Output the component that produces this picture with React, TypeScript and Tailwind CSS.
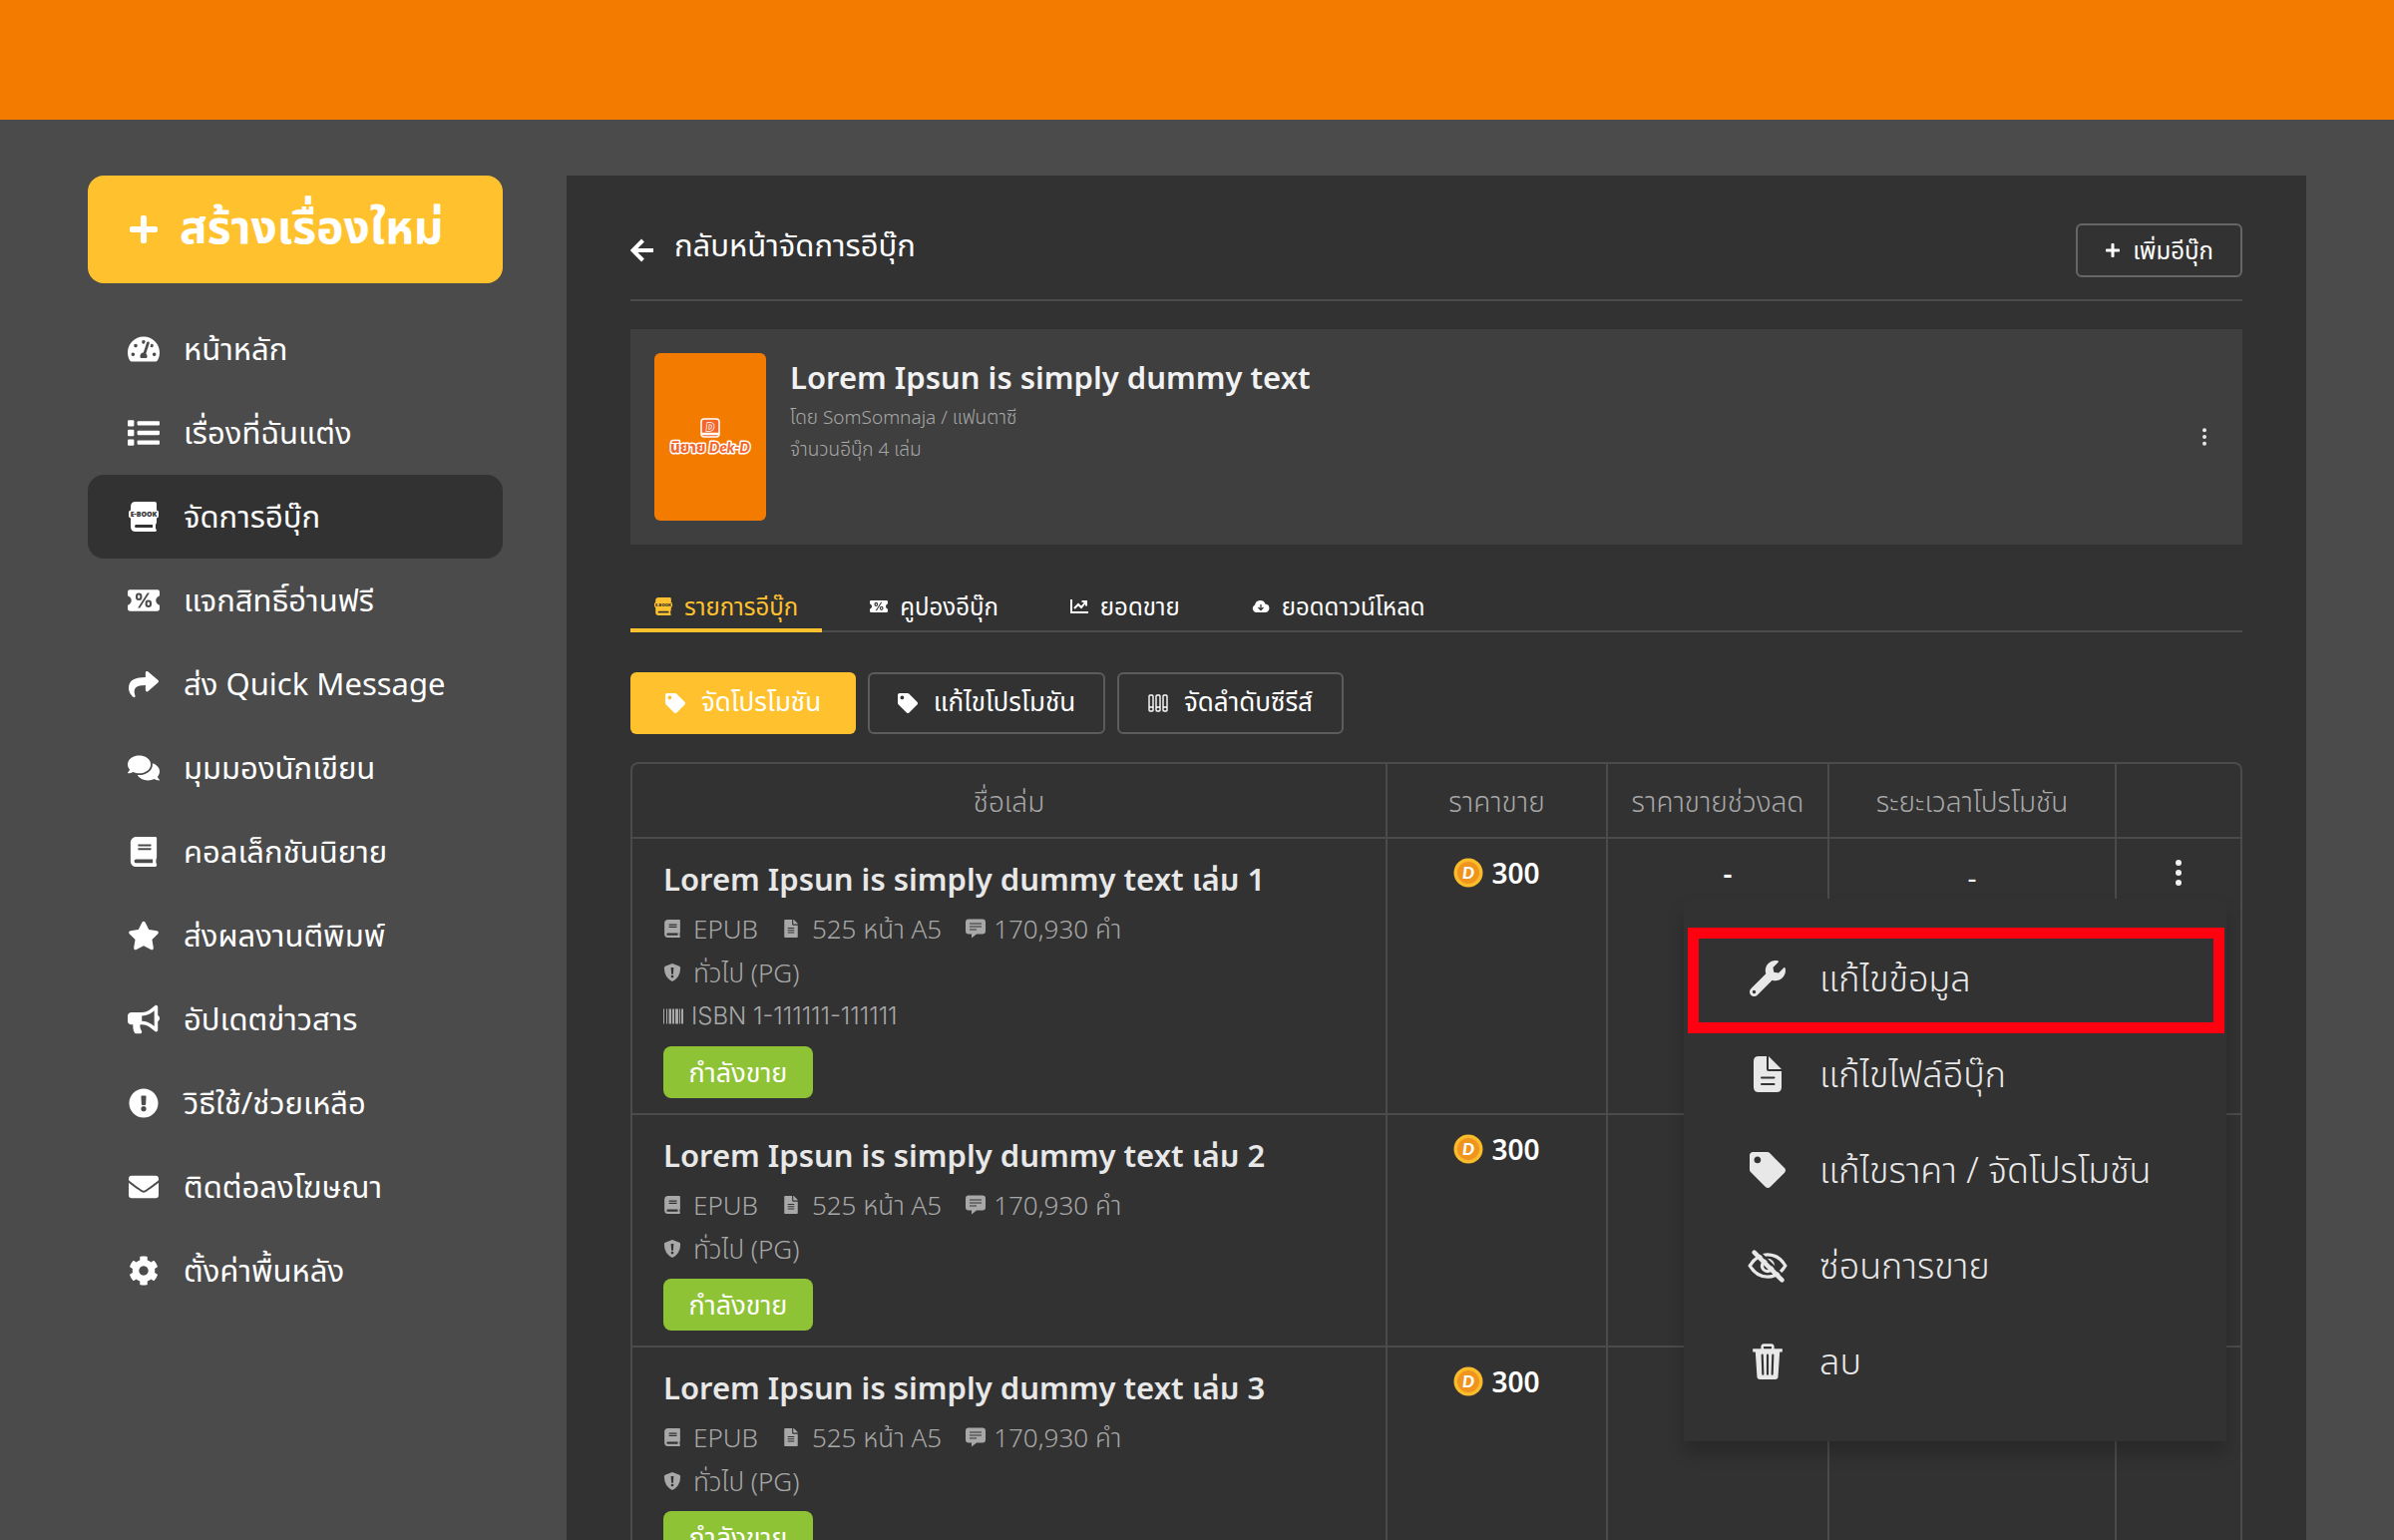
import React from 'react';
import type { IconType } from 'react-icons';
import {
  FaBook,
  FaBullhorn,
  FaCog,
  FaComments,
  FaEnvelope,
  FaExclamationCircle,
  FaFileAlt,
  FaPlus,
  FaShare,
  FaStar,
  FaTachometerAlt,
  FaTag,
  FaWrench,
} from 'react-icons/fa';

type IconProps = { className?: string };

const EbookIcon = ({ className }: IconProps) => (
  <svg viewBox="0 0 30 30" fill="currentColor" className={className} aria-hidden="true">
    <path
      fillRule="evenodd"
      d="M7 0H26Q28 0 28 2V8.500Q30 9 30 10.500V14Q30 16 28 16.500V21L27 23V27L28 28.500Q28 30 26 30H7Q2 30 2 25V16.500Q0 16 0 14V10.500Q0 9 2 8.500V5Q2 0 7 0ZM7.500 23Q6 23 6 24.500T7.500 26H24V23Z"
    />
    <text x="15" y="15" textAnchor="middle" fontSize="7" fontWeight="800" fill="#323232" fontFamily="Open Sans">
      E-BOOK
    </text>
  </svg>
);

const ListIcon = ({ className }: IconProps) => (
  <svg viewBox="0 0 30 24" fill="currentColor" className={className} aria-hidden="true">
    <rect x="0" y="0" width="6" height="6" rx="1" />
    <rect x="0" y="9" width="6" height="6" rx="1" />
    <rect x="0" y="18" width="6" height="6" rx="1" />
    <rect x="9" y="1" width="21" height="4" rx="1" />
    <rect x="9" y="10" width="21" height="4" rx="1" />
    <rect x="9" y="19" width="21" height="4" rx="1" />
  </svg>
);

const TicketIcon = ({ className }: IconProps) => (
  <svg viewBox="0 0 30 20" fill="currentColor" className={className} aria-hidden="true">
    <path
      fillRule="evenodd"
      d="M2 0H28Q30 0 30 2V5.500Q26.500 7 26.500 10T30 14.500V18Q30 20 28 20H2Q0 20 0 18V14.500Q3.500 13 3.500 10T0 5.500V2Q0 0 2 0ZM10.500 3A3 3 0 0 0 7.500 6V7A3 3 0 0 0 13.500 7V6A3 3 0 0 0 10.500 3ZM19.500 9.500A3 3 0 0 0 16.500 12.500V13.500A3 3 0 0 0 22.500 13.500V12.500A3 3 0 0 0 19.500 9.500ZM18.500 3H20.500L11.500 17H9.500Z"
    />
    <path d="M10.500 4.800a1 1 0 0 1 1 1v1.400a1 1 0 0 1-2 0V5.800a1 1 0 0 1 1-1ZM19.500 11.300a1 1 0 0 1 1 1v1.400a1 1 0 0 1-2 0v-1.400a1 1 0 0 1 1-1Z" />
  </svg>
);

const ArrowLeftIcon = ({ className }: IconProps) => (
  <svg viewBox="0 0 24 24" fill="none" stroke="currentColor" strokeWidth="4" className={className} aria-hidden="true">
    <path d="M23 12H3M12.500 2L2.500 12L12.500 22" />
  </svg>
);

const ChartIcon = ({ className }: IconProps) => (
  <svg viewBox="0 0 18 14" fill="none" stroke="currentColor" strokeWidth="2" className={className} aria-hidden="true">
    <path d="M1 0V13H18M4 9L8 5L11 8L15 3M11.500 2H16V6.500" />
  </svg>
);

const CloudDownIcon = ({ className }: IconProps) => (
  <svg viewBox="0 0 18 12" fill="currentColor" className={className} aria-hidden="true">
    <path d="M4 12A4 4 0 0 1 3 4.500A5.500 5.500 0 0 1 13.500 3.500A4.300 4.300 0 0 1 14 12Z" />
    <path d="M9 4V9.500M6.500 7L9 9.500L11.500 7" fill="none" stroke="#323232" strokeWidth="1.300" />
  </svg>
);

const BooksIcon = ({ className }: IconProps) => (
  <svg viewBox="0 0 20 18" fill="none" stroke="currentColor" strokeWidth="1.400" className={className} aria-hidden="true">
    <rect x="1" y="1" width="4" height="16" rx="1" />
    <rect x="8" y="1" width="4" height="16" rx="1" />
    <rect x="15" y="1" width="4" height="16" rx="1" />
    <path d="M1 13H5M8 13H12M15 13H19" />
  </svg>
);

const MessageIcon = ({ className }: IconProps) => (
  <svg viewBox="0 0 20 19" className={className} aria-hidden="true">
    <path d="M3 0H17Q20 0 20 3V12Q20 15 17 15H11L6 19V15H3Q0 15 0 12V3Q0 0 3 0Z" fill="currentColor" />
    <path d="M4 4.500H16M4 7.500H16M4 10.500H11" stroke="#323232" strokeWidth="1.200" />
  </svg>
);

const ShieldIcon = ({ className }: IconProps) => (
  <svg viewBox="0 0 18 20" className={className} aria-hidden="true">
    <path d="M9 0L17 3Q18 3.500 18 5Q18 15.500 9 20Q0 15.500 0 5Q0 3.500 1 3Z" fill="currentColor" />
    <path d="M7.500 4.500H10.500L10 12H8Z" fill="#323232" />
    <circle cx="9" cy="14.500" r="1.500" fill="#323232" />
  </svg>
);

const BarcodeIcon = ({ className }: IconProps) => (
  <svg viewBox="0 0 20 15" fill="currentColor" className={className} aria-hidden="true">
    <path d="M0 0h1v15H0zM3 0h1v15H3zM5.500 0h2.500v15H5.500zM9 0h2v15H9zM12 0h3v15h-3zM16 0h1v15h-1zM18 0h2v15h-2z" />
  </svg>
);

const FileIcon = ({ className }: IconProps) => (
  <svg viewBox="0 0 28 36" fill="currentColor" className={className} aria-hidden="true">
    <path
      fillRule="evenodd"
      d="M5 0H13V13Q13 15 15 15H28V31Q28 36 23 36H5Q0 36 0 31V5Q0 0 5 0ZM8 20.500A1 1 0 0 0 8 22.500H20.500A1 1 0 0 0 20.500 20.500ZM8 27A1 1 0 0 0 8 29H20.500A1 1 0 0 0 20.500 27Z"
    />
    <path d="M15 0L28 13H15Z" />
  </svg>
);

const EyeOffIcon = ({ className }: IconProps) => (
  <svg viewBox="0 0 36 30" fill="none" stroke="currentColor" className={className} aria-hidden="true">
    <path d="M2 15Q8 5 18 5T34 15Q28 25 18 25T2 15Z" strokeWidth="3" />
    <circle cx="18" cy="15" r="5" strokeWidth="3" />
    <path d="M9 1L34 26" stroke="#323232" strokeWidth="2" />
    <path d="M6 3L31 28" strokeWidth="4" strokeLinecap="round" />
  </svg>
);

const TrashIcon = ({ className }: IconProps) => (
  <svg viewBox="0 0 28 34" className={className} aria-hidden="true">
    <path d="M9 6V3Q9 1.500 10.500 1.500H17.500Q19 1.500 19 3V6" fill="none" stroke="currentColor" strokeWidth="2.500" />
    <path d="M0 5H28V8H25.500L24 31Q24 34 21 34H7Q4 34 4 31L2.500 8H0Z" fill="currentColor" />
    <path d="M9 11L9.600 29M14 11V29M19 11L18.400 29" stroke="#323232" strokeWidth="2" strokeLinecap="round" />
  </svg>
);

const DotsIcon = ({ className }: IconProps) => (
  <svg viewBox="0 0 6 26" fill="currentColor" className={className} aria-hidden="true">
    <circle cx="3" cy="3" r="3" />
    <circle cx="3" cy="13" r="3" />
    <circle cx="3" cy="23" r="3" />
  </svg>
);

const CoinIcon = ({ className }: IconProps) => (
  <svg viewBox="0 0 30 30" className={className} aria-hidden="true">
    <circle cx="15" cy="15" r="14.500" fill="#fbbc2c" />
    <circle cx="15" cy="15" r="11" fill="#f0941e" />
    <text x="15" y="21" textAnchor="middle" fontSize="17" fontWeight="900" fontStyle="italic" fill="#fff" fontFamily="Lato">
      D
    </text>
  </svg>
);

const CoverLogo = ({ className }: IconProps) => (
  <svg viewBox="0 0 84 60" className={className} aria-hidden="true">
    <rect x="33" y="12" width="18" height="18" rx="3" fill="#f4652a" stroke="#fff" strokeWidth="1.500" />
    <path d="M33 27H51" stroke="#fff" strokeWidth="2.500" />
    <text x="42" y="24" textAnchor="middle" fontSize="11" fontStyle="italic" fontWeight="900" fill="#f4652a" stroke="#fff" strokeWidth="1.500" paintOrder="stroke" fontFamily="Lato">
      D
    </text>
    <text x="42" y="46" textAnchor="middle" fontSize="15" fontWeight="800" fill="#f4652a" stroke="#fff" strokeWidth="3" paintOrder="stroke" strokeLinejoin="round" fontFamily="Lato, Noto Sans Thai, sans-serif">
      นิยาย <tspan fontStyle="italic" fontWeight="900">Dek-D</tspan>
    </text>
  </svg>
);

type Icon = IconType | React.FC<IconProps>;

const NAV_ITEMS: { label: string; icon: Icon; active?: boolean }[] = [
  { label: 'หน้าหลัก', icon: FaTachometerAlt },
  { label: 'เรื่องที่ฉันแต่ง', icon: ListIcon },
  { label: 'จัดการอีบุ๊ก', icon: EbookIcon, active: true },
  { label: 'แจกสิทธิ์อ่านฟรี', icon: TicketIcon },
  { label: 'ส่ง Quick Message', icon: FaShare },
  { label: 'มุมมองนักเขียน', icon: FaComments },
  { label: 'คอลเล็กชันนิยาย', icon: FaBook },
  { label: 'ส่งผลงานตีพิมพ์', icon: FaStar },
  { label: 'อัปเดตข่าวสาร', icon: FaBullhorn },
  { label: 'วิธีใช้/ช่วยเหลือ', icon: FaExclamationCircle },
  { label: 'ติดต่อลงโฆษณา', icon: FaEnvelope },
  { label: 'ตั้งค่าพื้นหลัง', icon: FaCog },
];

const TABS: { label: string; icon: Icon; active?: boolean }[] = [
  { label: 'รายการอีบุ๊ก', icon: EbookIcon, active: true },
  { label: 'คูปองอีบุ๊ก', icon: TicketIcon },
  { label: 'ยอดขาย', icon: ChartIcon },
  { label: 'ยอดดาวน์โหลด', icon: CloudDownIcon },
];

const MENU_ITEMS: { label: string; icon: Icon; highlighted?: boolean }[] = [
  { label: 'แก้ไขข้อมูล', icon: FaWrench, highlighted: true },
  { label: 'แก้ไขไฟล์อีบุ๊ก', icon: FileIcon },
  { label: 'แก้ไขราคา / จัดโปรโมชัน', icon: FaTag },
  { label: 'ซ่อนการขาย', icon: EyeOffIcon },
  { label: 'ลบ', icon: TrashIcon },
];

interface Book {
  id: number;
  title: string;
  isbn?: string;
  price: number;
  salePrice?: string;
  salePeriod?: string;
  menuOpen?: boolean;
}

const BOOKS: Book[] = [
  {
    id: 1,
    title: 'Lorem Ipsun is simply dummy text เล่ม 1',
    isbn: '1-111111-111111',
    price: 300,
    salePrice: '-',
    salePeriod: '-',
    menuOpen: true,
  },
  { id: 2, title: 'Lorem Ipsun is simply dummy text เล่ม 2', price: 300 },
  { id: 3, title: 'Lorem Ipsun is simply dummy text เล่ม 3', price: 300 },
];

const Sidebar = () => (
  <aside className="w-[416px] shrink-0">
    <button type="button" className="flex h-[108px] w-full items-center gap-5 rounded-2xl bg-[#ffc22e] px-10 text-[46px] font-bold leading-none text-white">
      <FaPlus className="size-8" />
      <span className="pb-2">สร้างเรื่องใหม่</span>
    </button>
    <nav className="mt-6">
      {NAV_ITEMS.map(({ label, icon: ItemIcon, active }) => (
        <a
          key={label}
          href="#"
          className={`flex h-[84px] items-center gap-6 rounded-2xl px-10 text-[31px] text-white ${active ? 'bg-[#323232]' : ''}`}
        >
          <ItemIcon className="h-[30px] w-8 shrink-0" />
          <span className="pb-0.5">{label}</span>
        </a>
      ))}
    </nav>
  </aside>
);

const RowMenu = () => (
  <div className="absolute right-3.5 top-[60px] z-10 w-[544px] bg-[#323232] py-8 text-left shadow-[0_12px_16px_rgba(0,0,0,0.2)]">
    {MENU_ITEMS.map(({ label, icon: ItemIcon, highlighted }) => (
      <button key={label} type="button" className="relative flex h-24 w-full items-center gap-8 px-16 text-[36px] font-light text-[#e8e8e8]">
        {highlighted && <span className="absolute -bottom-[7px] -top-[3px] left-1 right-0.5 border-[11px] border-[#ff0010]" />}
        <ItemIcon className="h-9 w-10 shrink-0" />
        {label}
      </button>
    ))}
  </div>
);

const App: React.FC = () => {
  return (
    <div className="flex h-screen flex-col overflow-hidden bg-[#4b4b4b] font-['Noto_Sans','Noto_Sans_Thai',sans-serif] text-white">
      <header className="h-[120px] shrink-0 bg-[#f37b00]" />
      <div className="flex min-h-0 flex-1 gap-16 px-[88px] pt-14">
        <Sidebar />
        <main className="min-w-0 flex-1 overflow-hidden bg-[#323232] px-16 pt-12">
          <div className="flex items-center justify-between border-b-2 border-[#4b4b4b] pb-[22px]">
            <a href="#" className="flex items-center gap-5 text-[31px] leading-10">
              <ArrowLeftIcon className="size-6" />
              <span className="pb-3">กลับหน้าจัดการอีบุ๊ก</span>
            </a>
            <button type="button" className="flex h-[54px] w-[167px] items-center justify-center gap-3 rounded-md border-2 border-[#666] text-[24px]">
              <FaPlus className="size-4" />
              เพิ่มอีบุ๊ก
            </button>
          </div>

          <section className="mt-7 flex gap-6 bg-[#3f3f3f] p-6">
            <div className="flex h-[168px] w-28 shrink-0 items-center justify-center rounded-md bg-[#f37b00]">
              <CoverLogo className="h-[60px] w-[84px]" />
            </div>
            <div className="flex-1">
              <h1 className="text-[31px] font-semibold leading-[48px] text-[#f2f2f2]">Lorem Ipsun is simply dummy text</h1>
              <p className="text-[19px] font-light leading-8 text-[#a8a8a8]">โดย SomSomnaja / แฟนตาซี</p>
              <p className="text-[19px] font-light leading-8 text-[#a8a8a8]">จำนวนอีบุ๊ก 4 เล่ม</p>
            </div>
            <button type="button" aria-label="เมนู" className="px-3 text-[#e8e8e8]">
              <DotsIcon className="h-5 w-1" />
            </button>
          </section>

          <div className="mt-10 flex gap-6 border-b-2 border-[#4b4b4b]">
            {TABS.map(({ label, icon: TabIcon, active }) => (
              <a
                key={label}
                href="#"
                className={`-mb-0.5 flex h-12 items-center gap-3 border-b-4 px-6 text-[24px] ${active ? 'border-[#ffc22e] text-[#ffc22e]' : 'border-transparent'}`}
              >
                <TabIcon className="size-[18px]" />
                {label}
              </a>
            ))}
          </div>

          <div className="mt-10 flex gap-3 text-[26px]">
            <button type="button" className="flex h-[62px] w-[226px] items-center justify-center gap-4 rounded-md bg-[#ffc22e]">
              <FaTag className="size-5" />
              <span className="pb-1">จัดโปรโมชัน</span>
            </button>
            <button type="button" className="flex h-[62px] w-[238px] items-center justify-center gap-4 rounded-md border-2 border-[#5c5c5c]">
              <FaTag className="size-5" />
              <span className="pb-1">แก้ไขโปรโมชัน</span>
            </button>
            <button type="button" className="flex h-[62px] w-[227px] items-center justify-center gap-4 rounded-md border-2 border-[#5c5c5c]">
              <BooksIcon className="size-5" />
              <span className="pb-1">จัดลำดับซีรีส์</span>
            </button>
          </div>

          <div className="mt-7 rounded-lg border-2 border-[#4b4b4b]">
            <table className="w-full table-fixed border-collapse">
              <thead>
                <tr className="h-[74px] text-[28px] text-[#a8a8a8] [&>th]:border-b-2 [&>th]:border-[#4b4b4b] [&>th]:p-0 [&>th]:font-light [&>th:not(:last-child)]:border-r-2">
                  <th>ชื่อเล่ม</th>
                  <th className="w-[221px]">ราคาขาย</th>
                  <th className="w-[222px]">ราคาขายช่วงลด</th>
                  <th className="w-[288px]">ระยะเวลาโปรโมชัน</th>
                  <th className="w-[125px]" aria-label="เมนู" />
                </tr>
              </thead>
              <tbody>
                {BOOKS.map((book) => (
                  <tr
                    key={book.id}
                    className="text-center align-top text-[28px] [&>td]:border-b-2 [&>td]:border-[#4b4b4b] [&>td]:pt-3.5 [&>td:not(:last-child)]:border-r-2"
                  >
                    <td className="px-[31px] pb-[15px] text-left">
                      <h2 className="mb-1 pt-0.5 text-[31px] font-semibold leading-[48px] text-[#e8e8e8]">{book.title}</h2>
                      <div className="text-[26px] font-light leading-[44px] text-[#a8a8a8]">
                        <p className="flex items-center">
                          <FaBook className="mr-3 size-[18px]" />
                          EPUB
                          <FaFileAlt className="ml-6 mr-3 size-[18px]" />
                          525 หน้า A5
                          <MessageIcon className="ml-6 mr-2 size-5" />
                          170,930 คำ
                        </p>
                        <p className="flex items-center gap-3">
                          <ShieldIcon className="size-[18px]" />
                          ทั่วไป (PG)
                        </p>
                        {book.isbn && (
                          <p className="flex items-center gap-2 font-['Inter',sans-serif] text-[24px] leading-[44px]">
                            <BarcodeIcon className="size-5" />
                            ISBN {book.isbn}
                          </p>
                        )}
                      </div>
                      <span className="mt-2 inline-flex h-[52px] w-[150px] items-center justify-center rounded-lg bg-[#8dc334] text-[27px] text-white">
                        กำลังขาย
                      </span>
                    </td>
                    <td>
                      <div className="flex items-center justify-center gap-2 font-semibold leading-10">
                        <CoinIcon className="size-[30px]" />
                        {book.price}
                      </div>
                    </td>
                    <td className="pl-5 font-semibold leading-10">{book.salePrice}</td>
                    <td className="leading-[48px]">{book.salePeriod}</td>
                    <td className="relative">
                      <button type="button" aria-label="เมนู" className="inline-flex h-10 items-center px-4 text-[#f2f2f2]">
                        <DotsIcon className="h-7 w-1.5" />
                      </button>
                      {book.menuOpen && <RowMenu />}
                    </td>
                  </tr>
                ))}
              </tbody>
            </table>
          </div>
        </main>
      </div>
    </div>
  );
};

export default App;
